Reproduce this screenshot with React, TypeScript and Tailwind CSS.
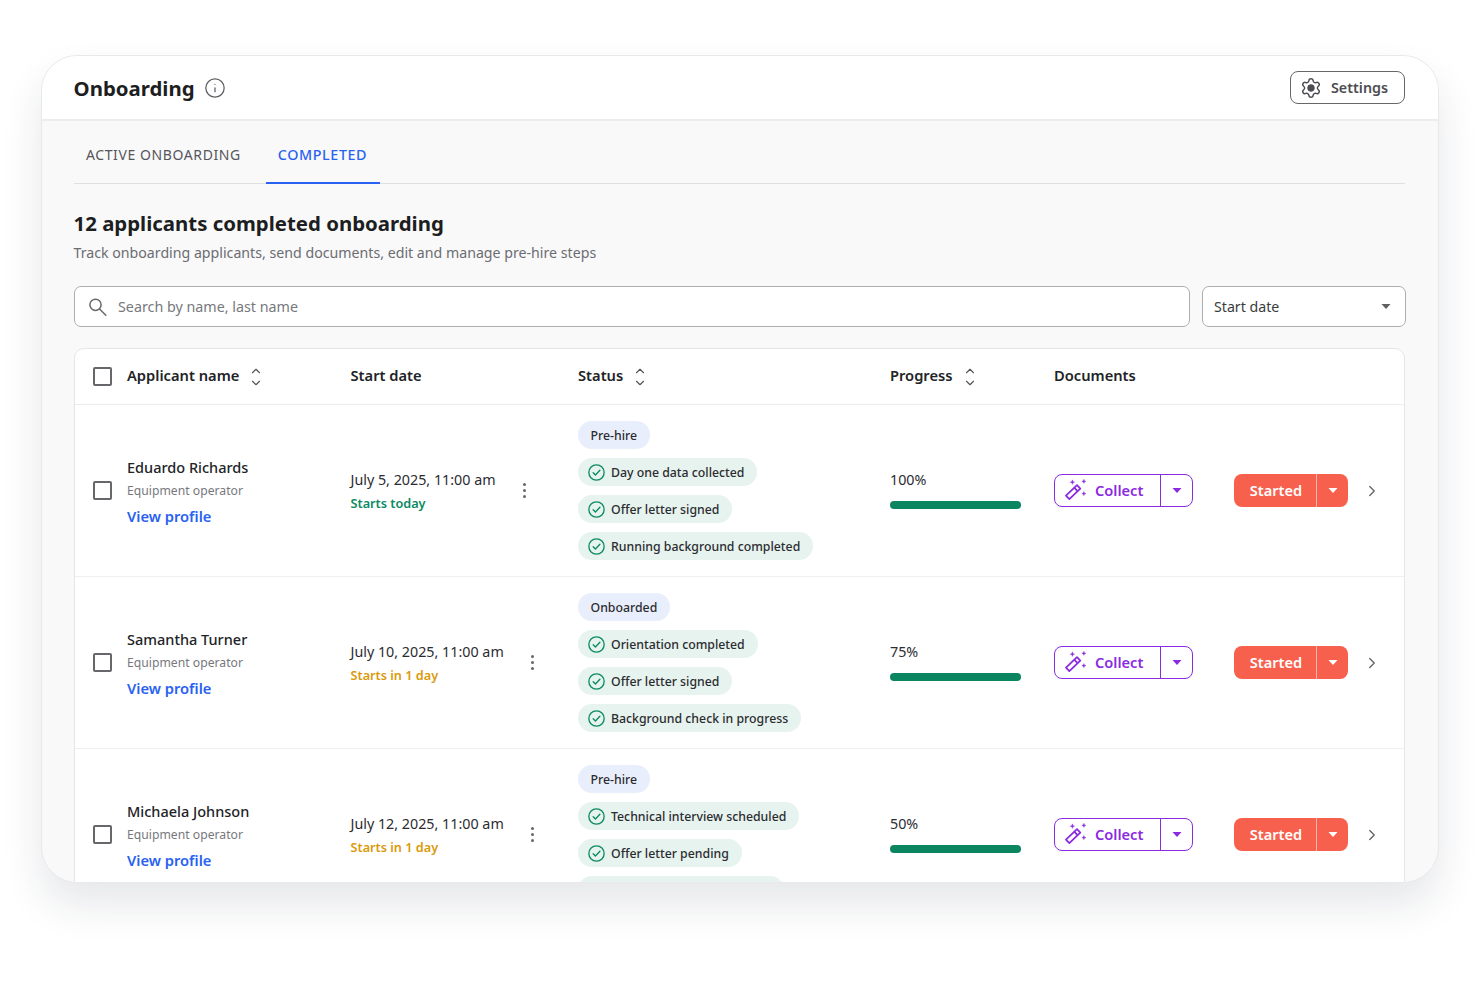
import React from "react";
import { Info, ChevronUp, ChevronDown, ChevronRight, Settings } from "lucide-react";

const font = { fontFamily: '"Noto Sans", sans-serif' };

function Caret({ className }: { className: string }) {
  return (
    <svg width="10" height="5" viewBox="0 0 10 5" className={className}>
      <path d="M0.5 0h9L5 5z" fill="currentColor" />
    </svg>
  );
}

function Sort() {
  return (
    <span className="ml-[10px] flex flex-col items-center text-[#55565b]">
      <ChevronUp size={14} strokeWidth={2} className="-mb-[1px]" />
      <ChevronDown size={14} strokeWidth={2} className="-mt-[1px]" />
    </span>
  );
}

function Checkbox() {
  return <span className="block h-[19px] w-[19px] rounded-[2px] border-2 border-[#66666b] bg-white" />;
}

function Check() {
  return (
    <svg width="17" height="17" viewBox="0 0 16 16" fill="none" stroke="#0a8a62" strokeWidth="1.25" strokeLinecap="round" strokeLinejoin="round">
      <circle cx="8" cy="8" r="7.2" />
      <path d="M4.9 8.2l2.1 2.1 4.2-4.4" />
    </svg>
  );
}

function Wand() {
  return (
    <svg width="23" height="23" viewBox="0 0 22 22" fill="none" stroke="#8a2be2" strokeWidth="1.7" strokeLinejoin="round">
      <path d="M1.9 15.85 12.4 5.85 15.6 9.15 5.1 19.15z" />
      <path d="M9.8 8.35 13 11.65" />
      <path d="M8 .8l.6 1.6 1.6.6-1.6.6-.6 1.6-.6-1.6-1.6-.6 1.6-.6z" fill="#8a2be2" strokeWidth="0.3" />
      <path d="M19 .2l.6 1.4 1.4.6-1.4.6-.6 1.4-.6-1.4-1.4-.6 1.4-.6z" fill="#8a2be2" strokeWidth="0.3" />
      <path d="M19 12l.6 1.4 1.4.6-1.4.6-.6 1.4-.6-1.4-1.4-.6 1.4-.6z" fill="#8a2be2" strokeWidth="0.3" />
    </svg>
  );
}

function SearchIcon() {
  return (
    <svg width="18" height="18" viewBox="0 0 18 18" fill="none" stroke="#66676b" strokeWidth="1.5" strokeLinecap="round">
      <circle cx="6.5" cy="6.8" r="5.6" />
      <path d="M10.6 11l6.2 6.2" />
    </svg>
  );
}

type Row = {
  name: string;
  date: string;
  when: string;
  whenClass: string;
  stage: string;
  steps: string[];
  progress: string;
};

const rows: Row[] = [
  {
    name: "Eduardo Richards",
    date: "July 5, 2025, 11:00 am",
    when: "Starts today",
    whenClass: "text-[#0a8a62]",
    stage: "Pre-hire",
    steps: ["Day one data collected", "Offer letter signed", "Running background completed"],
    progress: "100%",
  },
  {
    name: "Samantha Turner",
    date: "July 10, 2025, 11:00 am",
    when: "Starts in 1 day",
    whenClass: "text-[#d99a0b]",
    stage: "Onboarded",
    steps: ["Orientation completed", "Offer letter signed", "Background check in progress"],
    progress: "75%",
  },
  {
    name: "Michaela Johnson",
    date: "July 12, 2025, 11:00 am",
    when: "Starts in 1 day",
    whenClass: "text-[#d99a0b]",
    stage: "Pre-hire",
    steps: ["Technical interview scheduled", "Offer letter pending", "Background check pending"],
    progress: "50%",
  },
];

const cols = "grid grid-cols-[52px_223.5px_227.5px_312px_164px_1fr]";

function TableRow({ r }: { r: Row }) {
  return (
    <div className={`${cols} h-[172px] items-center border-b border-[#efefef]`}>
      <div className="pl-[18px]">
        <Checkbox />
      </div>
      <div className="flex flex-col">
        <span className="mt-[1px] text-[14.5px] leading-[20px] font-medium text-[#222326]">{r.name}</span>
        <span className="mt-[5px] text-[12.2px] leading-[18px] text-[#77787d]">Equipment operator</span>
        <span className="mt-[6px] text-[14.7px] leading-[20px] font-semibold text-[#2962f2]">View profile</span>
      </div>
      <div className="flex items-center">
        <div className="flex flex-col">
          <span className="text-[14.3px] leading-[20px] text-[#2b2c30]">{r.date}</span>
          <span className={`mt-[4px] text-[12.7px] leading-[18px] font-semibold ${r.whenClass}`}>{r.when}</span>
        </div>
        <span className="ml-[27px] flex flex-col gap-[2.5px]">
          <i className="block h-[3.5px] w-[3.5px] rounded-full bg-[#66676c]" />
          <i className="block h-[3.5px] w-[3.5px] rounded-full bg-[#66676c]" />
          <i className="block h-[3.5px] w-[3.5px] rounded-full bg-[#66676c]" />
        </span>
      </div>
      <div className="flex flex-col items-start gap-[9px]">
        <span className="flex h-[28px] items-center rounded-full bg-[#e9eefc] pt-[2px] pl-[12.5px] pr-[13px] text-[12.3px] font-medium text-[#2b2c30]">
          {r.stage}
        </span>
        {r.steps.map((s) => (
          <span key={s} className="flex h-[28px] items-center gap-[6px] rounded-full bg-[#e7f3ee] pl-[10px] pr-[13px] text-[12.3px] font-medium text-[#2b2c30]">
            <Check />
            <span className="pt-[2px]">{s}</span>
          </span>
        ))}
      </div>
      <div className="flex w-[131px] flex-col">
        <span className="-mt-[2px] text-[14.3px] leading-[20px] text-[#2b2c30]">{r.progress}</span>
        <span className="mt-[11px] block h-[8px] w-full rounded-full bg-[#0a8560]" />
      </div>
      <div className="flex items-center">
        <div className="flex h-[33px] w-[139px] rounded-[8px] border border-[#8a2be2] bg-white text-[#8a2be2]">
          <span className="flex w-[106px] items-center gap-[8px] border-r border-[#8a2be2] pl-[9px] text-[14.6px] font-semibold">
            <Wand />
            <span>Collect</span>
          </span>
          <span className="flex flex-1 items-center justify-center">
            <Caret className="text-[#8a2be2]" />
          </span>
        </div>
        <div className="ml-[41px] flex h-[33px] w-[114px] overflow-hidden rounded-[8px] bg-[#f7604c] text-white">
          <span className="flex w-[83px] items-center justify-center border-r border-[#fbb5aa] pl-[2px] text-[14.6px] font-semibold">Started</span>
          <span className="flex flex-1 items-center justify-center">
            <Caret className="text-white" />
          </span>
        </div>
        <ChevronRight size={18} strokeWidth={1.8} className="ml-[15px] text-[#66676c]" />
      </div>
    </div>
  );
}

export default function App() {
  return (
    <div className="min-h-[987px] bg-white pl-[41px] pt-[55px]" style={font}>
      <div className="h-[828px] w-[1398px] overflow-hidden rounded-[36px] border border-[#e9e9ea] bg-[#f9f9fa] shadow-[0_22px_40px_rgba(30,40,60,0.11)]">
        <div className="flex h-[65px] items-center justify-between border-b-2 border-[#ededee] bg-white pl-[31.5px] pr-[33px]">
          <div className="flex items-center gap-[9px]">
            <span className="text-[20.4px] leading-[30px] font-bold text-[#1d1e21]">Onboarding</span>
            <Info size={22} strokeWidth={1.4} className="text-[#5f6064]" />
          </div>
          <div className="flex h-[33px] w-[115px] items-center gap-[9px] rounded-[8px] border border-[#66676b] pl-[9px] text-[14.3px] font-semibold text-[#4c4d52]">
            <Settings size={22} strokeWidth={1.6}>
              <circle cx="12" cy="12" r="3" fill="currentColor" />
            </Settings>
            Settings
          </div>
        </div>

        <div className="pl-[32px] pr-[33px]">
          <div className="flex h-[63px] border-b border-[#dfe0e2]">
            <div className="flex h-[63px] items-center px-[12px] pt-[4px] text-[14px] tracking-[0.6px] text-[#55565b]">ACTIVE ONBOARDING</div>
            <div className="ml-[13px] flex h-[63px] w-[114px] items-center border-b-2 border-[#2962f2] px-[12px] pt-[6px] text-[14.3px] font-medium tracking-[0.6px] whitespace-nowrap text-[#2962f2]">COMPLETED</div>
          </div>

          <h1 className="-ml-[0.5px] mt-[23px] text-[20.4px] leading-[32px] font-bold text-[#1d1e21]">12 applicants completed onboarding</h1>
          <p className="-ml-[0.5px] mt-[4px] text-[14.18px] leading-[20px] text-[#6b6c71]">Track onboarding applicants, send documents, edit and manage pre-hire steps</p>

          <div className="mt-[23px] -mr-[1px] flex gap-[12px]">
            <div className="flex h-[41px] flex-1 items-center gap-[11px] rounded-[7px] border border-[#adaeb2] bg-white pl-[14px] text-[14.3px] text-[#77787d]">
              <SearchIcon />
              Search by name, last name
            </div>
            <div className="flex h-[41px] w-[204px] items-center justify-between rounded-[7px] border border-[#adaeb2] bg-white pl-[11px] pr-[14px] text-[14.2px] text-[#3b3c40]">
              Start date
              <Caret className="text-[#5f6064]" />
            </div>
          </div>

          <div className="mt-[21px] rounded-t-[10px] border border-[#e6e6e8] bg-white">
            <div className={`${cols} h-[56px] items-center border-b border-[#ececed] text-[14.7px] font-semibold text-[#222326]`}>
              <div className="pl-[18px]">
                <Checkbox />
              </div>
              <div className="flex items-center"><span className="pb-[2px]">Applicant name</span><Sort /></div>
              <div className="pb-[2px]">Start date</div>
              <div className="flex items-center"><span className="pb-[2px]">Status</span><Sort /></div>
              <div className="flex items-center"><span className="pb-[2px]">Progress</span><Sort /></div>
              <div className="pb-[2px]">Documents</div>
            </div>
            {rows.map((r) => (
              <TableRow key={r.name} r={r} />
            ))}
          </div>
        </div>
      </div>
    </div>
  );
}
